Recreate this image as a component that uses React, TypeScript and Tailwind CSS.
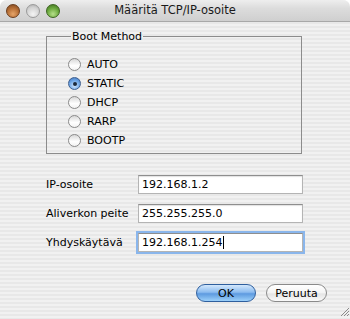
import React from 'react';

const font = { fontFamily: '"DejaVu Sans", "Liberation Sans", sans-serif' };

function Light({ kind }: { kind: 'red' | 'gray' | 'green' }) {
    const cls =
        kind === 'red'
            ? 'bg-[radial-gradient(circle_at_50%_75%,#e6a56a_0%,#b56d34_55%,#7a4520_100%)] border-[#6b3d1d]'
            : kind === 'gray'
              ? 'bg-[radial-gradient(circle_at_50%_75%,#f4f4f4_0%,#d2d2d2_60%,#a8a8a8_100%)] border-[#9a9a9a]'
              : 'bg-[radial-gradient(circle_at_50%_75%,#b6e08a_0%,#6aa83c_55%,#3f6e1e_100%)] border-[#3c6420]';
    return <div className={`w-[14px] h-[14px] rounded-full border ${cls}`} />;
}

function Radio({ label, checked }: { label: string; checked?: boolean }) {
    return (
        <div className="flex items-center h-[19px]">
            {checked ? (
                <div className="w-[13px] h-[13px] rounded-full border border-[#3d5f8f] bg-[radial-gradient(circle_at_50%_70%,#cfe6ff_0%,#6ea6e6_55%,#3a6fb8_100%)] flex items-center justify-center">
                    <div className="w-[4px] h-[4px] rounded-full bg-[#1c2a3c]" />
                </div>
            ) : (
                <div className="w-[13px] h-[13px] rounded-full border border-[#8a8a8a] bg-[linear-gradient(180deg,#d8d8d8_0%,#ffffff_60%,#f2f2f2_100%)]" />
            )}
            <span className="ml-[6px] text-[11px] leading-none text-black">{label}</span>
        </div>
    );
}

function Field({ label, value, focused }: { label: string; value: string; focused?: boolean }) {
    return (
        <div className="flex items-center h-[19px]">
            <span className="w-[92px] text-[11px] leading-none text-black">{label}</span>
            <div
                className={`w-[165px] h-[19px] bg-white border border-[#b4b4b4] border-t-[#8e8e8e] flex items-center pl-[3px] ${
                    focused ? 'shadow-[0_0_0_2px_#8ab6ec]' : 'shadow-[inset_0_1px_1px_rgba(0,0,0,0.12)]'
                }`}
            >
                <span className="text-[11px] leading-none text-black">{value}</span>
                {focused && <span className="w-px h-[13px] bg-black ml-px" />}
            </div>
        </div>
    );
}

export default function App() {
    return (
        <div className="w-[350px] h-[319px] bg-white" style={font}>
            <div className="w-full h-full rounded-t-[7px] overflow-hidden flex flex-col bg-[repeating-linear-gradient(180deg,#f1f1f1_0px,#f1f1f1_2px,#e8e8e8_2px,#e8e8e8_4px)]">
                {/* Title bar */}
                <div className="relative h-[22px] shrink-0 flex items-center bg-[linear-gradient(180deg,#eeeeee_0%,#dcdcdc_40%,#cfcfcf_100%)] border-b border-[#a8a8a8]">
                    <div className="flex gap-[6px] pl-[6px]">
                        <Light kind="red" />
                        <Light kind="gray" />
                        <Light kind="green" />
                    </div>
                    <span className="absolute inset-0 flex items-center justify-center text-[11.5px] text-[#1a1a1a]">
                        Määritä TCP/IP-osoite
                    </span>
                </div>

                {/* Content */}
                <div className="relative flex-1 flex flex-col pl-[46px] pt-[8px]">
                    <fieldset className="w-[256px] h-[124px] border border-[#8c8c8c] pl-[21px] pt-[12px]">
                        <legend className="ml-[3px] px-px text-[11px] leading-[13px] text-black">Boot Method</legend>
                        <Radio label="AUTO" />
                        <Radio label="STATIC" checked />
                        <Radio label="DHCP" />
                        <Radio label="RARP" />
                        <Radio label="BOOTP" />
                    </fieldset>

                    <div className="flex flex-col gap-[10px] mt-[21px]">
                        <Field label="IP-osoite" value="192.168.1.2" />
                        <Field label="Aliverkon peite" value="255.255.255.0" />
                        <Field label="Yhdyskäytävä" value="192.168.1.254" focused />
                    </div>

                    <div className="flex justify-end gap-[10px] pr-[23px] mt-[32px]">
                        <button className="w-[60px] h-[18px] rounded-full border border-[#2f5f9e] bg-[linear-gradient(180deg,#d4e8fc_0%,#8cbcf0_45%,#5d9ae0_55%,#9cd0fa_100%)] text-[11px] leading-none text-black">
                            OK
                        </button>
                        <button className="w-[61px] h-[18px] rounded-full border border-[#8a8a8a] bg-[linear-gradient(180deg,#ffffff_0%,#f4f4f4_50%,#e4e4e4_55%,#fafafa_100%)] text-[11px] leading-none text-black">
                            Peruuta
                        </button>
                    </div>

                    <svg className="absolute right-0 bottom-[2px]" width="11" height="11" viewBox="0 0 11 11">
                        <path d="M10 2 L2 10 M10 5 L5 10 M10 8 L8 10" stroke="#8a8a8a" strokeWidth="1" />
                    </svg>
                </div>
            </div>
        </div>
    );
}
